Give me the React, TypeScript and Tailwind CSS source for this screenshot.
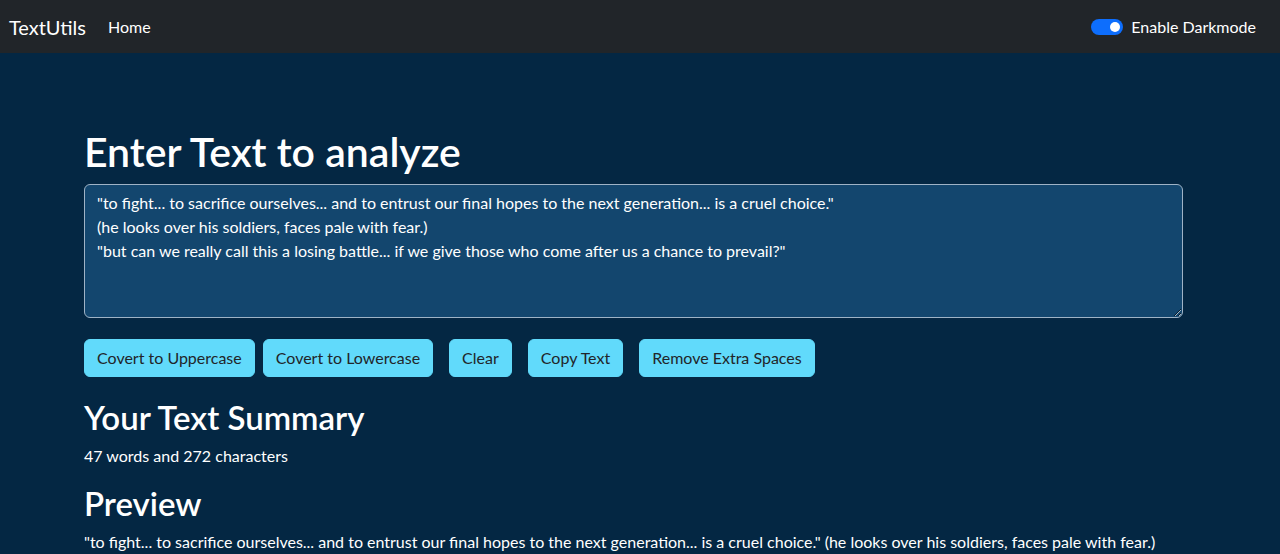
import { useState } from "react";

const initialText = `"to fight... to sacrifice ourselves... and to entrust our final hopes to the next generation... is a cruel choice."
(he looks over his soldiers, faces pale with fear.)
"but can we really call this a losing battle... if we give those who come after us a chance to prevail?"`;

const buttons = [
  { label: "Covert to Uppercase", cls: "mr-2" },
  { label: "Covert to Lowercase", cls: "mr-4" },
  { label: "Clear", cls: "mr-4" },
  { label: "Copy Text", cls: "mr-4" },
  { label: "Remove Extra Spaces", cls: "" },
];

const App = () => {
  const [text, setText] = useState(initialText);
  const [dark, setDark] = useState(true);

  // same count the original app shows (splits on spaces only)
  const words = text.split(" ").filter((w) => w.length !== 0).length;

  return (
    <div
      className="h-screen overflow-y-scroll bg-[#042743] text-white font-['Lato','Noto_Sans',sans-serif]
      [&::-webkit-scrollbar]:w-[8px] [&::-webkit-scrollbar-track]:bg-[#2b2b2b]
      [&::-webkit-scrollbar-thumb]:bg-[#9f9f9f] [&::-webkit-scrollbar-thumb]:rounded-b-[3px]"
    >
      <nav className="h-[53px] bg-[#212529] flex items-center px-[9px]">
        <a href="#" className="text-[20px] text-white mr-[22px]">
          TextUtils
        </a>
        <a href="#" className="text-[16px] text-white">
          Home
        </a>
        <div className="ml-auto flex items-center gap-2 pr-[15px]">
          <button
            onClick={() => setDark(!dark)}
            className="w-8 h-4 rounded-full bg-[#0d6efd] flex items-center justify-end px-[3px]"
          >
            <span className="w-[10px] h-[10px] rounded-full bg-white" />
          </button>
          <span className="text-[16px] text-white">Enable Darkmode</span>
        </div>
      </nav>

      <div className="w-[1099px] ml-[84px] pt-[75px]">
        <h1 className="text-[41px] leading-[48px] font-semibold mb-2">
          Enter Text to analyze
        </h1>
        <textarea
          rows={5}
          value={text}
          onChange={(e) => setText(e.target.value)}
          className="block w-full h-[134px] bg-[#13466e] text-white border border-[#9fb3c6] rounded-md px-3 py-[6px] text-[16px] leading-6 outline-none"
        />
        <div className="flex mt-[21px]">
          {buttons.map((b) => (
            <button
              key={b.label}
              className={`${b.cls} bg-[#61dafb] text-[#212529] text-[16px] leading-6 px-3 py-[6px] rounded-md border border-[#61dafb]`}
            >
              {b.label}
            </button>
          ))}
        </div>

        <h2 className="text-[33px] leading-[38px] font-semibold mt-[21px] mb-2">
          Your Text Summary
        </h2>
        <p className="text-[16px] leading-6 mb-4">
          {words} words and {text.length} characters
        </p>
        <h2 className="text-[33px] leading-[38px] font-semibold mb-2">
          Preview
        </h2>
        <p className="text-[16px] leading-6">{text.replace(/\n/g, " ")}</p>
      </div>
    </div>
  );
};

export default App;
